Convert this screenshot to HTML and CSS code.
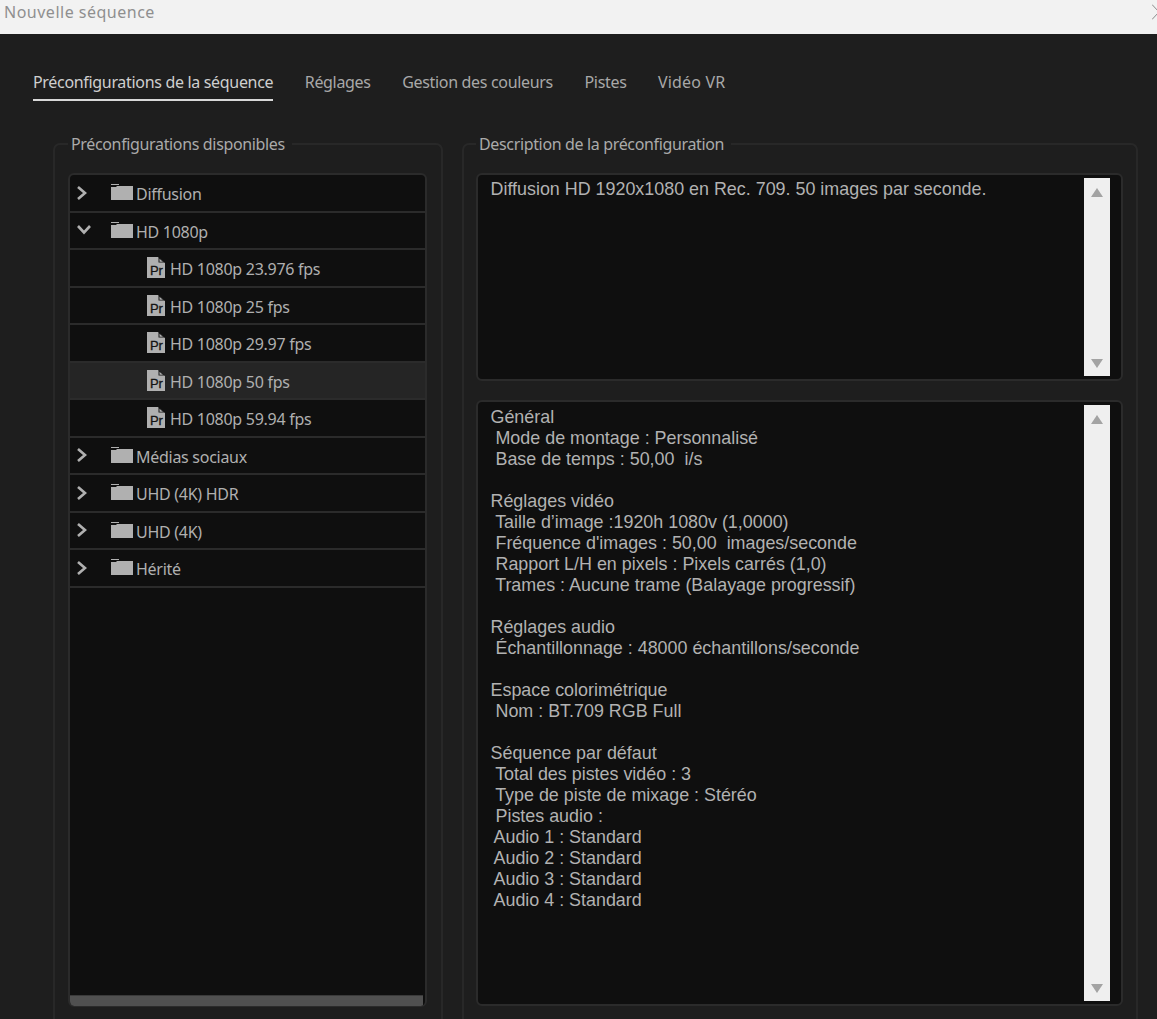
FILE: index.html
```html
<!DOCTYPE html>
<html lang="fr">
<head>
<meta charset="utf-8">
<title>Nouvelle séquence</title>
<link rel="stylesheet" href="styles.css">
</head>
<body>
<svg class="defs" width="0" height="0" aria-hidden="true">
  <symbol id="folder" viewBox="0 0 22 16"><path d="M0 0h8v1H0zM0 3h5l1-1h16v14H0z" fill="#b0b0b0"/></symbol>
  <symbol id="preset" viewBox="0 0 18 21"><path d="M0 0h11l7 6v15H0z" fill="#b0b0b0"/><path d="M11.500 0l6.500 5.500h-6.500z" fill="#141414"/><path d="M12.500 1.800l3.500 3h-3.500z" fill="#b0b0b0"/></symbol>
  <symbol id="right" viewBox="0 0 12 16"><path d="M2 2l7 6-7 6" fill="none" stroke="#b0b0b0" stroke-width="2.600"/></symbol>
  <symbol id="down" viewBox="0 0 16 12"><path d="M2 2l6 6.500L14 2" fill="none" stroke="#b0b0b0" stroke-width="2.600"/></symbol>
</svg>
<header class="titlebar">
  <span class="title">Nouvelle séquence</span>
  <svg class="close" width="5" height="16" viewBox="0 0 5 16"><path d="M0 .5l7 7.500-7 7.500" fill="none" stroke="#8a8a8a" stroke-width="1"/></svg>
</header>
<nav class="tabs">
  <span class="tab active">Préconfigurations de la séquence</span>
  <span class="tab">Réglages</span>
  <span class="tab">Gestion des couleurs</span>
  <span class="tab">Pistes</span>
  <span class="tab tab-wide">Vidéo VR</span>
</nav>
<main class="panels">
  <fieldset class="group group-left">
    <legend>Préconfigurations disponibles</legend>
    <div class="tree">
      <div class="rows">
        <div class="row"><svg class="chev"><use href="#right"/></svg><svg class="folder"><use href="#folder"/></svg><span>Diffusion</span></div>
        <div class="row"><svg class="chev chev-down"><use href="#down"/></svg><svg class="folder"><use href="#folder"/></svg><span>HD 1080p</span></div>
        <div class="row leaf"><svg class="preset" viewBox="0 0 18 21"><use href="#preset"/><text x="3" y="17.500" class="pr">Pr</text></svg><span>HD 1080p 23.976 fps</span></div>
        <div class="row leaf"><svg class="preset" viewBox="0 0 18 21"><use href="#preset"/><text x="3" y="17.500" class="pr">Pr</text></svg><span>HD 1080p 25 fps</span></div>
        <div class="row leaf"><svg class="preset" viewBox="0 0 18 21"><use href="#preset"/><text x="3" y="17.500" class="pr">Pr</text></svg><span>HD 1080p 29.97 fps</span></div>
        <div class="row leaf selected"><svg class="preset" viewBox="0 0 18 21"><use href="#preset"/><text x="3" y="17.500" class="pr">Pr</text></svg><span>HD 1080p 50 fps</span></div>
        <div class="row leaf"><svg class="preset" viewBox="0 0 18 21"><use href="#preset"/><text x="3" y="17.500" class="pr">Pr</text></svg><span>HD 1080p 59.94 fps</span></div>
        <div class="row"><svg class="chev"><use href="#right"/></svg><svg class="folder"><use href="#folder"/></svg><span>Médias sociaux</span></div>
        <div class="row"><svg class="chev"><use href="#right"/></svg><svg class="folder"><use href="#folder"/></svg><span>UHD (4K) HDR</span></div>
        <div class="row"><svg class="chev"><use href="#right"/></svg><svg class="folder"><use href="#folder"/></svg><span>UHD (4K)</span></div>
        <div class="row"><svg class="chev"><use href="#right"/></svg><svg class="folder"><use href="#folder"/></svg><span>Hérité</span></div>
      </div>
      <div class="hscroll"></div>
    </div>
  </fieldset>
  <fieldset class="group group-right">
    <legend>Description de la préconfiguration</legend>
    <div class="textbox box-short">
      <div class="text">Diffusion HD 1920x1080 en Rec. 709. 50 images par seconde.</div>
      <div class="vscroll"><i class="arrow up"></i><i class="arrow down"></i></div>
    </div>
    <div class="textbox box-long">
      <pre class="text">Général
 Mode de montage : Personnalisé
 Base de temps : 50,00  i/s

Réglages vidéo
 Taille d’image :1920h 1080v (1,0000)
 Fréquence d'images : 50,00  images/seconde
 Rapport L/H en pixels : Pixels carrés (1,0)
 Trames : Aucune trame (Balayage progressif)

Réglages audio
 Échantillonnage : 48000 échantillons/seconde

Espace colorimétrique
 Nom : BT.709 RGB Full

Séquence par défaut
 Total des pistes vidéo : 3
 Type de piste de mixage : Stéréo
 Pistes audio :
<span class="audio">Audio 1 : Standard</span>
<span class="audio">Audio 2 : Standard</span>
<span class="audio">Audio 3 : Standard</span>
<span class="audio">Audio 4 : Standard</span></pre>
      <div class="vscroll"><i class="arrow up"></i><i class="arrow down"></i></div>
    </div>
  </fieldset>
</main>
</body>
</html>
```
FILE: styles.css
```css
* { box-sizing: border-box; }
html, body { margin: 0; height: 1019px; overflow: hidden; }
body { background: #1e1e1e; color: #b4b4b4; font-family: "Noto Sans", sans-serif; font-size: 16px; }
.defs { display: block; height: 0; }
.pr { font: 400 13px "Liberation Sans", sans-serif; fill: #141414; stroke: #141414; stroke-width: 0.3px; }

.titlebar { height: 34px; background: #f2f2f2; display: flex; align-items: center; justify-content: space-between; padding-left: 4px; overflow: hidden; }
.title { color: #8f8f8f; font-size: 16px; position: relative; top: -5px; letter-spacing: 0.5px; }
.close { flex: none; margin-top: -11px; }

.tabs { display: flex; gap: 31.500px; padding: 35px 0 0 33px; height: 99px; }
.tab { color: #a8a8a8; font-size: 16px; letter-spacing: -0.32px; line-height: 26px; height: 32px; white-space: nowrap; }
.tab.active { color: #cfcfcf; border-bottom: 2px solid #d8d8d8; }
.tab-wide { letter-spacing: 0.18px; }

.panels { display: flex; align-items: flex-start; gap: 19px; padding-left: 53px; }
.group { margin: 0; border: 2px solid #282828; border-bottom: 0; border-radius: 7px 7px 0 0; height: 886px; min-width: 0; }
.group-left { width: 390px; padding: 18px 14px 0 13px; }
.group-right { width: 676px; padding: 18px 13px 0 12px; }
legend { color: #aaa; font-size: 16px; letter-spacing: -0.35px; line-height: 22px; padding: 0 7px 0 3px; margin-left: 0; }

.tree { height: 834px; background: #0f0f0f; border: 2px solid #2b2b2b; border-bottom-width: 1px; border-radius: 6px; display: flex; flex-direction: column; justify-content: space-between; overflow: hidden; }
.rows { display: flex; flex-direction: column; }
.row { height: 37.500px; border-bottom: 2px solid #2b2b2b; display: flex; align-items: center; padding-left: 6px; color: #b0b0b0; font-size: 16px; letter-spacing: -0.28px; }
.row span { position: relative; top: 1.250px; }
.row.leaf { padding-left: 77px; }
.row.selected { background: #252525; }
.chev { width: 12px; height: 16px; flex: none; margin-right: 23px; }
.chev-down { width: 16px; height: 12px; margin-right: 19px; }
.folder { width: 22px; height: 16px; flex: none; margin-right: 3px; margin-top: -1px; }
.preset { width: 18px; height: 21px; flex: none; margin-right: 5px; }
.hscroll { height: 11px; background: #505050; margin-right: 2px; border-top: 1px solid #3a3a3a; }

.textbox { background: #0f0f0f; border: 2px solid #2b2b2b; border-radius: 6px; display: flex; justify-content: space-between; padding: 3px 11px 3px 12.500px; }
.box-short { height: 208px; margin-bottom: 19px; }
.box-short .text { margin-top: 1px; }
.box-long { height: 606px; }
.box-long .text { margin-top: 2px; }
.text { margin: 0; font: 17.900px/21px "Liberation Sans", sans-serif; color: #b2b2b2; white-space: pre; }
.audio { margin-left: 3px; }
.vscroll { width: 26px; background: #efefef; display: flex; flex-direction: column; justify-content: space-between; align-items: center; padding: 10px 0 8px; }
.arrow { display: block; width: 0; height: 0; border-left: 6px solid transparent; border-right: 6px solid transparent; }
.arrow.up { border-bottom: 9px solid #a3a3a3; }
.arrow.down { border-top: 9px solid #a3a3a3; }
```
